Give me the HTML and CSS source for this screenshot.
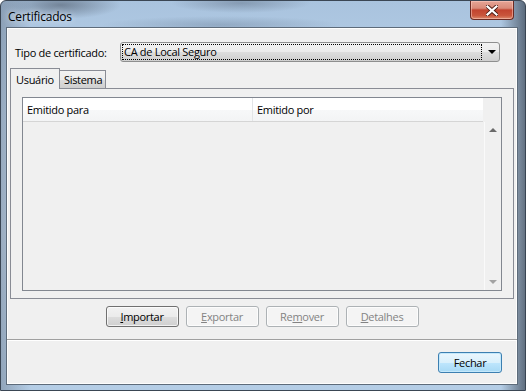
FILE: index.html
```html
<!DOCTYPE html>
<html>
<head>
  <meta charset="UTF-8">
  <title>Certificados</title>
  <link rel="stylesheet" href="styles.css">
</head>
<body>
  <div class="window">
    <div class="titlebar">
      <div class="title">Certificados</div>
      <div class="close-button">
        <svg width="12" height="11" viewBox="0 0 12 11">
          <path d="M1.5 1.5 L10.5 9.5 M10.5 1.5 L1.5 9.5" stroke="#4a1a12" stroke-width="4" stroke-linecap="square"/>
          <path d="M1.5 1.5 L10.5 9.5 M10.5 1.5 L1.5 9.5" stroke="#ffffff" stroke-width="2.2" stroke-linecap="square"/>
        </svg>
      </div>
    </div>

    <div class="client">
      <!-- Certificate type -->
      <div class="type-row">
        <label class="type-label">Tipo de certificado:</label>
        <div class="combo">
          <div class="combo-focus">CA de Local Seguro</div>
          <div class="combo-arrow"></div>
        </div>
      </div>

      <!-- Tabs -->
      <div class="tabs">
        <div class="tab selected">Usuário</div>
        <div class="tab">Sistema</div>
      </div>

      <div class="panel">
        <div class="list">
          <div class="list-top">
            <div class="list-header">
              <div class="col col-to">Emitido para</div>
              <div class="col col-by">Emitido por</div>
            </div>
            <div class="header-filler"></div>
          </div>
          <div class="list-body">
            <div class="rows"></div>
            <div class="scrollbar">
              <div class="scroll-arrow up"></div>
              <div class="scroll-arrow down"></div>
            </div>
          </div>
        </div>
      </div>

      <div class="button-group">
        <button class="button"><u>I</u>mportar</button>
        <button class="button" disabled><u>E</u>xportar</button>
        <button class="button" disabled>Re<u>m</u>over</button>
        <button class="button" disabled><u>D</u>etalhes</button>
      </div>

      <div class="separator"></div>

      <div class="footer">
        <button class="button default-button">Fechar</button>
      </div>
    </div>
  </div>
</body>
</html>
```

FILE: styles.css
```css
body {
  margin: 0;
  font-family: "Open Sans", "Noto Sans", sans-serif;
  font-size: 11px;
  letter-spacing: -0.3px;
  color: #000;
  background: #fff;
}

.window {
  width: 526px;
  height: 391px;
  box-sizing: border-box;
  border: 1px solid #3a4654;
  border-radius: 6px 6px 0 0;
  padding: 0 7px 5px 5px;
  display: flex;
  flex-direction: column;
  overflow: hidden;
  background:
    radial-gradient(ellipse 60px 14px at 60px 4px, rgba(70, 80, 95, 0.55), transparent),
    radial-gradient(ellipse 70px 10px at 240px 2px, rgba(90, 105, 125, 0.45), transparent),
    radial-gradient(ellipse 120px 9px at 220px 24px, rgba(95, 115, 140, 0.35), transparent),
    linear-gradient(90deg, rgba(80, 90, 105, 0.35), transparent 30px, transparent 500px, rgba(40, 48, 60, 0.6)),
    linear-gradient(180deg, #a9c3de 0%, #bcd4ec 30%, #c2d8ee 60%, #b4cde6 100%);
}

.titlebar {
  height: 26px;
  display: flex;
  align-items: flex-start;
}

.title {
  padding: 7px 0 0 2px;
  font-size: 12px;
  letter-spacing: -0.2px;
  color: #000;
  text-shadow: 0 0 6px rgba(255, 255, 255, 0.9);
}

.close-button {
  margin-left: auto;
  margin-right: 4px;
  width: 44px;
  height: 19px;
  box-sizing: border-box;
  border: 1px solid #6b2a22;
  border-top: none;
  border-radius: 0 0 4px 4px;
  background: linear-gradient(180deg, #e6a596 0%, #d98a79 40%, #c2442f 50%, #c9553c 80%, #dc8a6c 100%);
  box-shadow: inset 0 0 0 1px rgba(255, 210, 200, 0.5);
  display: flex;
  align-items: center;
  justify-content: center;
}

.client {
  flex: 1;
  border: 1px solid #5d6b7a;
  box-shadow: inset 0 0 0 1px #fdfdfd;
  background: #f0f0f0;
  display: flex;
  flex-direction: column;
}

.type-row {
  display: flex;
  align-items: center;
  margin-top: 14px;
  padding-left: 8px;
  height: 20px;
}

.type-label {
  width: 105px;
}

.combo {
  width: 380px;
  height: 20px;
  box-sizing: border-box;
  border: 1px solid #8e8f8f;
  border-radius: 3px;
  background: linear-gradient(180deg, #f2f2f2 0%, #ebebeb 50%, #dddddd 51%, #cfcfcf 100%);
  display: flex;
  align-items: center;
  padding: 0 1px;
}

.combo-focus {
  width: 360px;
  height: 16px;
  box-sizing: border-box;
  border: 1px dotted #000;
  padding-left: 1px;
  line-height: 14px;
}

.combo-arrow {
  margin-left: 6px;
  width: 0;
  height: 0;
  border-left: 4px solid transparent;
  border-right: 4px solid transparent;
  border-top: 4px solid #000;
}

.tabs {
  display: flex;
  align-items: flex-end;
  margin: 6px 0 0 3px;
  height: 20px;
}

.tab {
  height: 18px;
  box-sizing: border-box;
  border: 1px solid #898c95;
  border-bottom: none;
  padding: 1px 3px 0 4px;
  margin-left: -1px;
  background: linear-gradient(180deg, #f2f2f2 0%, #ebebeb 50%, #dddddd 51%, #cfcfcf 100%);
}

.tab.selected {
  position: relative;
  z-index: 1;
  height: 21px;
  margin-left: 0;
  margin-bottom: -1px;
  padding: 3px 5px 0 5px;
  background: #f0f0f0;
}

.panel {
  width: 504px;
  height: 211px;
  box-sizing: border-box;
  margin-left: 3px;
  border: 1px solid #898c95;
  padding: 8px 0 0 11px;
}

.list {
  width: 480px;
  height: 194px;
  box-sizing: border-box;
  border: 1px solid #828790;
  display: flex;
  flex-direction: column;
}

.list-top {
  display: flex;
  height: 24px;
}

.list-header {
  width: 460px;
  display: flex;
  background: linear-gradient(180deg, #ffffff 0%, #ffffff 50%, #f7f8f9 51%, #f3f4f5 100%);
  border-bottom: 1px solid #d5d5d5;
}

.col {
  line-height: 23px;
  padding-left: 4px;
}

.col-to {
  width: 225px;
  border-right: 1px solid #e3e5e7;
}

.header-filler {
  flex: 1;
}

.list-body {
  flex: 1;
  display: flex;
}

.rows {
  flex: 1;
}

.scrollbar {
  width: 15px;
  margin-right: 1px;
  border-left: 1px solid #fafafa;
  display: flex;
  flex-direction: column;
  justify-content: space-between;
  align-items: center;
  padding: 6px 0 6px;
}

.scroll-arrow {
  width: 0;
  height: 0;
  border-left: 4px solid transparent;
  border-right: 4px solid transparent;
}

.scroll-arrow.up {
  border-bottom: 4px solid #6a6a6a;
}

.scroll-arrow.down {
  border-top: 4px solid #a3a3a3;
}

.button-group {
  display: flex;
  justify-content: center;
  gap: 7px;
  margin-top: 7px;
}

.button {
  width: 73px;
  height: 21px;
  box-sizing: border-box;
  border: 1px solid #707070;
  border-radius: 3px;
  padding: 0;
  font-family: inherit;
  font-size: 11px;
  letter-spacing: -0.3px;
  color: #000;
  background: linear-gradient(180deg, #f2f2f2 0%, #ebebeb 50%, #dddddd 51%, #cfcfcf 100%);
  box-shadow: inset 0 0 0 1px rgba(255, 255, 255, 0.7);
}

.button:disabled {
  border-color: #adb2b5;
  background: #f4f4f4;
  color: #838383;
}

.separator {
  margin-top: 12px;
  border-top: 1px solid #a0a0a0;
  border-bottom: 1px solid #ffffff;
}

.footer {
  display: flex;
  justify-content: flex-end;
  padding: 11px 15px 0 0;
}

.default-button {
  width: 64px;
  border-color: #3c7fb1;
  background: linear-gradient(180deg, #eaf6fd 0%, #d9f0fc 50%, #bee6fd 51%, #a7d9f5 100%);
  box-shadow: inset 0 0 0 1px #c4e8fb;
}
```
